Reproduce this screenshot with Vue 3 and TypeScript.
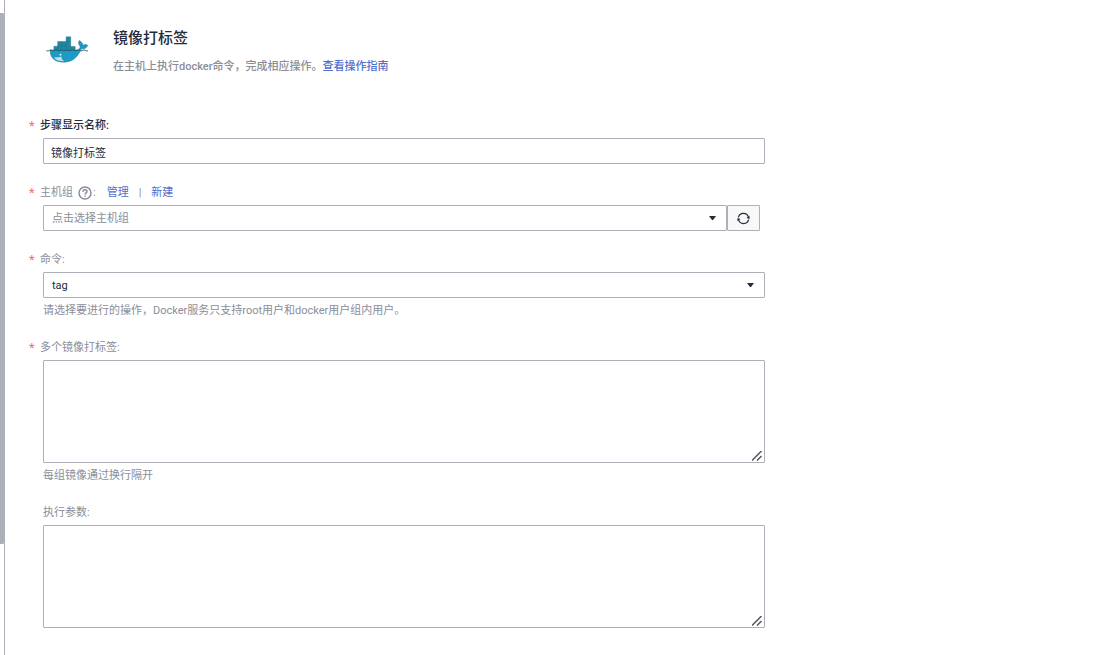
<script setup lang="ts">
import { ref } from 'vue'

const stepName = ref('镜像打标签')
const hostGroup = ref('')
const command = ref('tag')
const images = ref('')
const params = ref('')
const commands: string[] = ['tag']
</script>

<template>
  <div class="page">
    <div class="rail"><div class="thumb"></div></div>
    <main class="content">
      <header class="intro">
        <svg class="logo" viewBox="0 0 44 32" aria-hidden="true">
          <g fill="#25869f">
            <path d="M21 3h5v5h-5zM12 8h14v5H12zM8 13h23v5H8z" />
          </g>
          <g stroke="#1f7890" stroke-width="0.4" fill="none">
            <path d="M21 3h5v5h-5zM12 8h4v5h-4zM16 8h5v5h-5zM21 8h5v5h-5zM8 13h4v4H8zM12 13h4v4h-4zM16 13h5v4h-5zM21 13h5v4h-5z" />
          </g>
          <path d="M4 17h28c3 0 4-2 4-4-2-2-2-4-1-6 2 1 4 3 4 5 2-1 4-1 5 0-1 3-3 4-7 4-3 8-9 14-18 14C9 30 4 26 4 17z" fill="#1e9bc4" stroke="#267d98" stroke-width="0.6" />
          <path d="M8 25c3 0 6 0 8-1 0 2 1 4 3 5-5 0-9-1-11-4z" fill="#c3dfe7" />
          <circle cx="15" cy="22" r="1" fill="#e9f7fa" />
          <path d="M0 18h2l2-1 3 1 3-1 3 1 3-1 3 1 3-1 3 1 3-1 3 1 3-1 3 1 3-1 3 1h2" fill="none" stroke="#24576a" stroke-width="0.9" />
        </svg>
        <div>
          <h1>镜像打标签</h1>
          <p class="desc">在主机上执行docker命令，完成相应操作。<a href="#guide">查看操作指南</a></p>
        </div>
      </header>

      <form class="form" @submit.prevent>
        <div class="field">
          <div class="label strong"><span class="star">*</span><label for="step">步骤显示名称:</label></div>
          <input id="step" v-model="stepName" class="control" type="text" />
        </div>

        <div class="field">
          <div class="label">
            <span class="star">*</span><label for="host">主机组</label>
            <svg class="help" viewBox="0 0 14 14" aria-hidden="true">
              <circle cx="7" cy="7" r="6" fill="none" stroke="currentColor" stroke-width="1.5" />
              <path d="M5 5.7C5 4.4 5.8 3.7 7 3.7s2 .7 2 1.8C9 6.8 7.1 6.8 7.1 8.4" fill="none" stroke="currentColor" stroke-width="1.5" />
              <path d="M6.4 9.4h1.4v1.4H6.4z" fill="currentColor" />
            </svg>
            <span>:</span>
            <a class="manage" href="#manage">管理</a><span class="divider">|</span><a href="#create">新建</a>
          </div>
          <div class="host-row">
            <div class="select-wrap">
              <select id="host" v-model="hostGroup" class="control placeholder">
                <option value="">点击选择主机组</option>
              </select>
              <svg class="caret" viewBox="0 0 7 4" aria-hidden="true"><path d="M0 0h7L4 4H3z" fill="#252b3a" /></svg>
            </div>
            <button class="refresh" type="button" aria-label="刷新">
              <svg viewBox="0 0 14 14" aria-hidden="true">
                <path d="M1.5 5.8A5.6 5.6 0 0 1 12.3 5.5M12.5 8.2A5.6 5.6 0 0 1 1.7 8.5" fill="none" stroke="#252b3a" stroke-width="1.3" />
                <path d="M13.5 4v3.5l-3.3-1zM.5 10V6.500l3.300 1z" fill="#252b3a" />
              </svg>
            </button>
          </div>
        </div>

        <div class="field">
          <div class="label"><span class="star">*</span><label for="command">命令:</label></div>
          <div class="select-wrap">
            <select id="command" v-model="command" class="control">
              <option v-for="item in commands" :key="item" :value="item">{{ item }}</option>
            </select>
            <svg class="caret" viewBox="0 0 7 4" aria-hidden="true"><path d="M0 0h7L4 4H3z" fill="#252b3a" /></svg>
          </div>
          <p class="hint">请选择要进行的操作，Docker服务只支持root用户和docker用户组内用户。</p>
        </div>

        <div class="field">
          <div class="label"><span class="star">*</span><label for="images">多个镜像打标签:</label></div>
          <div class="area-wrap">
            <textarea id="images" v-model="images" class="control"></textarea>
            <svg class="grip" viewBox="0 0 10 10" aria-hidden="true"><path d="M0 9.5L9.500 0M5 9.500L9.500 5" stroke="#555" stroke-width="1.5" /></svg>
          </div>
          <p class="hint">每组镜像通过换行隔开</p>
        </div>

        <div class="field">
          <div class="label optional"><label for="params">执行参数:</label></div>
          <div class="area-wrap">
            <textarea id="params" v-model="params" class="control"></textarea>
            <svg class="grip" viewBox="0 0 10 10" aria-hidden="true"><path d="M0 9.500L9.500 0M5 9.500L9.500 5" stroke="#555" stroke-width="1.5" /></svg>
          </div>
        </div>
      </form>
    </main>
  </div>
</template>

<style>
body {
  background: #fff;
}
</style>

<style scoped>
.page {
  display: flex;
  min-height: 100vh;
  font: 11px/18px Roboto, "Noto Sans CJK SC", sans-serif;
  color: #8a8e99;
}
.rail {
  box-sizing: border-box;
  flex: none;
  width: 5px;
  padding-top: 13px;
  border-right: 1px solid #adb0b8;
}
.thumb {
  width: 5px;
  height: 81vh;
  background: #adb0b8;
  border-radius: 0 3px 3px 0;
}
.content {
  flex: 1;
  min-width: 0;
  padding: 26px 24px 24px 38px;
}
.intro {
  display: flex;
  gap: 25px;
}
.logo {
  width: 42px;
  height: 30px;
  margin: 8px 0 0 3px;
}
h1 {
  margin: 0;
  font-size: 15px;
  line-height: 24px;
  font-weight: 500;
  color: #252b3a;
}
.desc {
  margin: 8px 0 0;
  font-weight: 500;
}
a {
  color: #526ecc;
  text-decoration: none;
}
.form {
  display: flex;
  flex-direction: column;
  gap: 19px;
  max-width: 722px;
  margin-top: 40px;
}
.label {
  display: flex;
  align-items: center;
  height: 20px;
  margin: 0 0 2px -14px;
}
.label.optional {
  margin-left: 0;
}
.strong {
  font-weight: 500;
  color: #252b3a;
}
.star {
  width: 11px;
  font-size: 13px;
  line-height: 16px;
  font-weight: 400;
  color: #f66f6a;
}
.help {
  width: 14px;
  height: 14px;
  margin: 0 1px 0 5px;
}
.manage {
  margin-left: 11px;
}
.divider {
  margin: 0 10px;
}
.control {
  box-sizing: border-box;
  display: block;
  width: 100%;
  height: 26px;
  margin: 0;
  padding: 1px 7px 0;
  font: inherit;
  color: #252b3a;
  background: #fff;
  border: 1px solid #adb0b8;
  border-radius: 1px;
  outline: none;
  appearance: none;
}
select.control {
  padding: 2px 8px 0;
}
.control.placeholder {
  color: #8a8e99;
}
.host-row {
  display: flex;
  margin-right: 5px;
}
.select-wrap {
  position: relative;
  flex: 1;
}
.caret {
  position: absolute;
  top: 11px;
  right: 11px;
  width: 7px;
  height: 4px;
  pointer-events: none;
}
.refresh {
  box-sizing: border-box;
  display: grid;
  place-items: center;
  width: 33px;
  height: 26px;
  padding: 0;
  background: #f8f8f8;
  border: 1px solid #adb0b8;
  border-radius: 1px;
}
.refresh svg {
  width: 13px;
  height: 13px;
}
.area-wrap {
  position: relative;
}
textarea.control {
  height: 103px;
  padding: 4px 8px;
  resize: none;
}
.grip {
  position: absolute;
  right: 3px;
  bottom: 2px;
  width: 10px;
  height: 10px;
  pointer-events: none;
}
.hint {
  margin: 4px 0 -1px;
}
</style>
